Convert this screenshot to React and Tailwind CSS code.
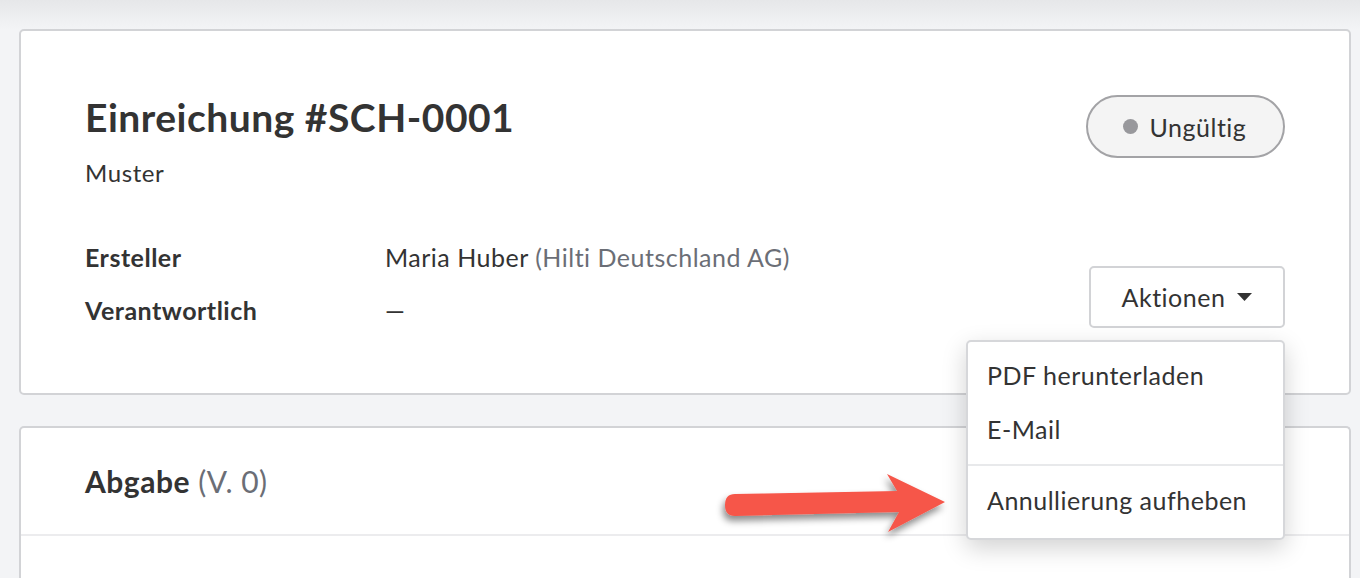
import React from "react";

function Arrow() {
  return (
    <svg
      className="absolute left-[715px] top-[466px]"
      width="245"
      height="80"
      viewBox="0 0 245 80"
      style={{ overflow: "visible" }}
    >
      <defs>
        <filter id="sh" x="-20%" y="-40%" width="140%" height="200%">
          <feDropShadow dx="-2" dy="5" stdDeviation="3.5" floodColor="#000" floodOpacity="0.45" />
        </filter>
      </defs>
      <path
        d="M20 28 L182 25 L172 8 L230 36 L173 66 L184 46 L20 50 Q10 50 10 39 Q10 28 20 28 Z"
        fill="#f6564a"
        filter="url(#sh)"
      />
    </svg>
  );
}

export default function App() {
  return (
    <div
      className="relative w-[1360px] h-[578px] overflow-hidden bg-[#f3f4f6] text-[#333333]"
      style={{ fontFamily: "Lato, 'Open Sans', sans-serif" }}
    >
      <div className="h-[29px] bg-gradient-to-b from-[#e6e7e9] to-[#f3f4f6]" />
      <div className="pl-[19px] pr-[9px]">
        {/* Card 1 */}
        <div className="relative rounded-[5px] border-2 border-[#d2d3d6] bg-white px-[64px] pt-[65px] pb-[65px]">
          <div className="flex justify-between">
            <div>
              <h1 className="text-[39px] leading-[43px] font-bold tracking-[0.5px]">Einreichung #SCH-0001</h1>
              <div className="mt-[19px] text-[24px] leading-[30px] tracking-[0.6px]">Muster</div>
              <div className="mt-[54px] flex flex-col gap-[23px] text-[25px] leading-[30px] tracking-[0.5px]">
                <div className="flex">
                  <div className="w-[300px] font-bold">Ersteller</div>
                  <div>
                    Maria Huber <span className="text-[#6b6e76]">(Hilti Deutschland AG)</span>
                  </div>
                </div>
                <div className="flex">
                  <div className="w-[300px] font-bold">Verantwortlich</div>
                  <div>—</div>
                </div>
              </div>
            </div>
            <div className="relative flex flex-col items-end">
              <div className="-mt-[1px] flex h-[63px] w-[199px] items-center justify-center gap-[12px] rounded-full border-2 border-[#a3a3a6] bg-[#f4f4f4] pr-[2px]">
                <span className="h-[15px] w-[15px] rounded-full bg-[#98989c]" />
                <span className="text-[25px] leading-[30px] tracking-[0.5px]">Ungültig</span>
              </div>
              <div className="mt-[108px] flex h-[62px] w-[196px] items-center justify-center gap-[12px] rounded-[5px] border-2 border-[#d2d3d6] bg-white">
                <span className="text-[25px] leading-[30px] tracking-[0.5px]">Aktionen</span>
                <svg width="15" height="8" viewBox="0 0 15 8">
                  <path d="M0 0 L15 0 L7.5 8 Z" fill="#333333" />
                </svg>
              </div>
              {/* Dropdown */}
              <div className="absolute right-0 top-[244px] z-10 w-[319px] rounded-[5px] border-2 border-[#d6d7da] bg-white pt-[7px] pb-[10px] shadow-[0_8px_24px_rgba(0,0,0,0.18)] text-[25px] tracking-[0.5px]">
                <div className="flex h-[54px] items-center px-[19px]">PDF herunterladen</div>
                <div className="flex h-[54px] items-center px-[19px]">E-Mail</div>
                <div className="mt-[7px] mb-[8px] h-[2px] bg-[#e8e9eb]" />
                <div className="flex h-[54px] items-center px-[19px]">Annullierung aufheben</div>
              </div>
            </div>
          </div>
        </div>

        {/* Card 2 */}
        <div className="mt-[31px] rounded-t-[5px] border-2 border-b-0 border-[#d2d3d6] bg-white h-[200px]">
          <div className="h-[108px] border-b-2 border-[#ececee] px-[64px] pt-[36px]">
            <div className="text-[30px] leading-[34px] tracking-[0.5px]">
              <span className="font-bold">Abgabe</span>{" "}
              <span className="text-[#6b6e76]">(V. 0)</span>
            </div>
          </div>
        </div>
      </div>
      <Arrow />
    </div>
  );
}
